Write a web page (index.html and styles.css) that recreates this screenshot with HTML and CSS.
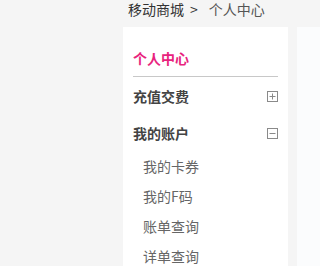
FILE: index.html
```html
<!DOCTYPE html>
<html lang="zh-CN">
<head>
<meta charset="utf-8">
<title>个人中心</title>
<link rel="stylesheet" href="styles.css">
</head>
<body>
<div class="page">
  <div class="crumb"><span class="crumb-link">移动商城</span><span class="crumb-sep">&gt;</span><span class="crumb-cur">个人中心</span></div>
  <div class="main">
    <aside class="side">
      <div class="side-title">个人中心</div>
      <div class="group">
        <div class="group-head"><span>充值交费</span>
          <svg class="tog" width="11" height="11" viewBox="0 0 11 11"><rect x="0.5" y="0.5" width="10" height="10" fill="none" stroke="#8a8a8a"/><path d="M2.5 5.5h6M5.5 2.5v6" stroke="#8a8a8a" fill="none"/></svg>
        </div>
      </div>
      <div class="group">
        <div class="group-head"><span>我的账户</span>
          <svg class="tog" width="11" height="11" viewBox="0 0 11 11"><rect x="0.5" y="0.5" width="10" height="10" fill="none" stroke="#8a8a8a"/><path d="M2.5 5.5h6" stroke="#8a8a8a" fill="none"/></svg>
        </div>
        <ul class="sub">
          <li>我的卡券</li>
          <li>我的F码</li>
          <li>账单查询</li>
          <li>详单查询</li>
        </ul>
      </div>
    </aside>
    <section class="content"></section>
  </div>
</div>
</body>
</html>
```
FILE: styles.css
```css
html, body {
  margin: 0;
  padding: 0;
  background: #f5f5f5;
  font-family: "Microsoft YaHei", "Noto Sans CJK SC", "Noto Sans", sans-serif;
  font-size: 14px;
}
.page {
  padding-left: 123px;
}
.crumb {
  padding-left: 5px;
  height: 27px;
  line-height: 18px;
  color: #333;
  white-space: nowrap;
}
.crumb-sep {
  margin: 0 11px 0 6px;
  color: #333;
}
.crumb-cur {
  color: #555;
}
.main {
  display: flex;
  gap: 9px;
  align-items: stretch;
}
.side {
  flex: 0 0 165px;
  background: #fff;
  padding: 0 10px;
  box-sizing: border-box;
  min-height: 239px;
}
.side-title {
  color: #e8237d;
  font-weight: bold;
  padding-top: 20px;
  line-height: 22px;
  padding-bottom: 7px;
  border-bottom: 1px solid #c8c8c8;
}
.group {
  margin-top: 1px;
}
.group:first-of-type {
  margin-top: 2px;
}
.group-head {
  display: flex;
  justify-content: space-between;
  align-items: center;
  height: 36px;
  font-weight: bold;
  color: #444;
}
.tog {
  display: block;
}
.sub {
  list-style: none;
  margin: 0;
  padding: 0 0 0 10px;
}
.sub li {
  line-height: 30px;
  color: #666;
}
.content {
  flex: 1;
  background: #fbfcfd;
}
```
